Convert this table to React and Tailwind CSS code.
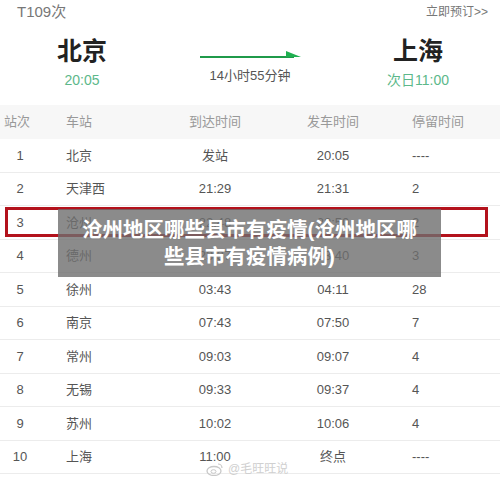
const rows = [
  ["1", "北京", "发站", "20:05", "----"],
  ["2", "天津西", "21:29", "21:31", "2"],
  ["3", "沧州", "22:48", "22:50", "2"],
  ["4", "德州", "23:37", "23:40", "3"],
  ["5", "徐州", "03:43", "04:11", "28"],
  ["6", "南京", "07:43", "07:50", "7"],
  ["7", "常州", "09:03", "09:07", "4"],
  ["8", "无锡", "09:33", "09:37", "4"],
  ["9", "苏州", "10:02", "10:06", "4"],
  ["10", "上海", "11:00", "终点", "----"],
];

const font = { fontFamily: '"Liberation Sans", "Noto Sans CJK SC", sans-serif' };

export default function App() {
  return (
    <div className="relative w-[500px] h-[487px] overflow-hidden bg-white" style={font}>
      {/* train header */}
      <div className="flex justify-between items-center h-[24px] pl-[17px] pr-[12px]">
        <span className="text-[15px] text-[#777]">T109次</span>
        <span className="text-[12px] text-[#777]">立即预订&gt;&gt;</span>
      </div>
      <div className="grid grid-cols-[164px_172px_164px] h-[81px]">
        <div className="flex flex-col items-center pt-[12px]">
          <span className="text-[25px] leading-[30px] font-bold text-[#222]">北京</span>
          <span className="text-[14px] leading-[20px] mt-[4px] text-[#5cb88a]">20:05</span>
        </div>
        <div className="flex flex-col items-center pt-[26px]">
          <svg width="104" height="10" viewBox="0 0 104 10">
            <line x1="2" y1="7" x2="96" y2="7" stroke="#1f9a4a" strokeWidth="2" />
            <polygon points="88,1 103,7 88,7" fill="#1fb050" />
          </svg>
          <span className="text-[13px] leading-[20px] mt-[6px] text-[#555]">14小时55分钟</span>
        </div>
        <div className="flex flex-col items-center pt-[12px]">
          <span className="text-[25px] leading-[30px] font-bold text-[#222]">上海</span>
          <span className="text-[14px] leading-[20px] mt-[4px] text-[#5cb88a]">次日11:00</span>
        </div>
      </div>

      {/* table */}
      <div className="grid grid-cols-[40px_120px_110px_126px_1fr] items-center h-[34px] bg-[#f7f7f7] text-[13px] text-[#999]">
        <span className="text-center pr-[6px]">站次</span>
        <span className="pl-[26px]">车站</span>
        <span className="text-center">到达时间</span>
        <span className="text-center">发车时间</span>
        <span className="pl-[16px]">停留时间</span>
      </div>
      {rows.map((r) => (
        <div
          key={r[0]}
          className="grid grid-cols-[40px_120px_110px_126px_1fr] items-center h-[33.5px] border-b border-[#ececec] text-[13px] text-[#555]"
        >
          <span className="text-center">{r[0]}</span>
          <span className="pl-[26px]">{r[1]}</span>
          <span className="text-center">{r[2]}</span>
          <span className="text-center">{r[3]}</span>
          <span className="pl-[16px]">{r[4]}</span>
        </div>
      ))}

      {/* watermark */}
      <div className="absolute left-[206px] top-[460px] flex items-center gap-[4px] text-[#d0d0d0] text-[12px]">
        <svg width="18" height="14" viewBox="0 0 18 14">
          <ellipse cx="8" cy="9" rx="7" ry="4.5" fill="none" stroke="#c8c8c8" strokeWidth="1.3" />
          <ellipse cx="7.5" cy="9.5" rx="2.5" ry="1.8" fill="none" stroke="#c8c8c8" strokeWidth="1" />
          <path d="M12 2 A4 4 0 0 1 16 6" fill="none" stroke="#c8c8c8" strokeWidth="1.2" />
        </svg>
        <span>@毛旺旺说</span>
      </div>

      {/* highlight box */}
      <div className="absolute left-[5px] top-[207px] w-[483px] h-[30px] border-[3px] border-[#b3121c]" />

      {/* title overlay */}
      <div className="absolute left-[58px] top-[209px] w-[383px] h-[68px] bg-[#6e6e6e]/80 flex items-center justify-center">
        <p className="text-white font-bold text-[20.5px] leading-[27px] text-center whitespace-nowrap">
          沧州地区哪些县市有疫情(沧州地区哪
          <br />
          些县市有疫情病例)
        </p>
      </div>
    </div>
  );
}
